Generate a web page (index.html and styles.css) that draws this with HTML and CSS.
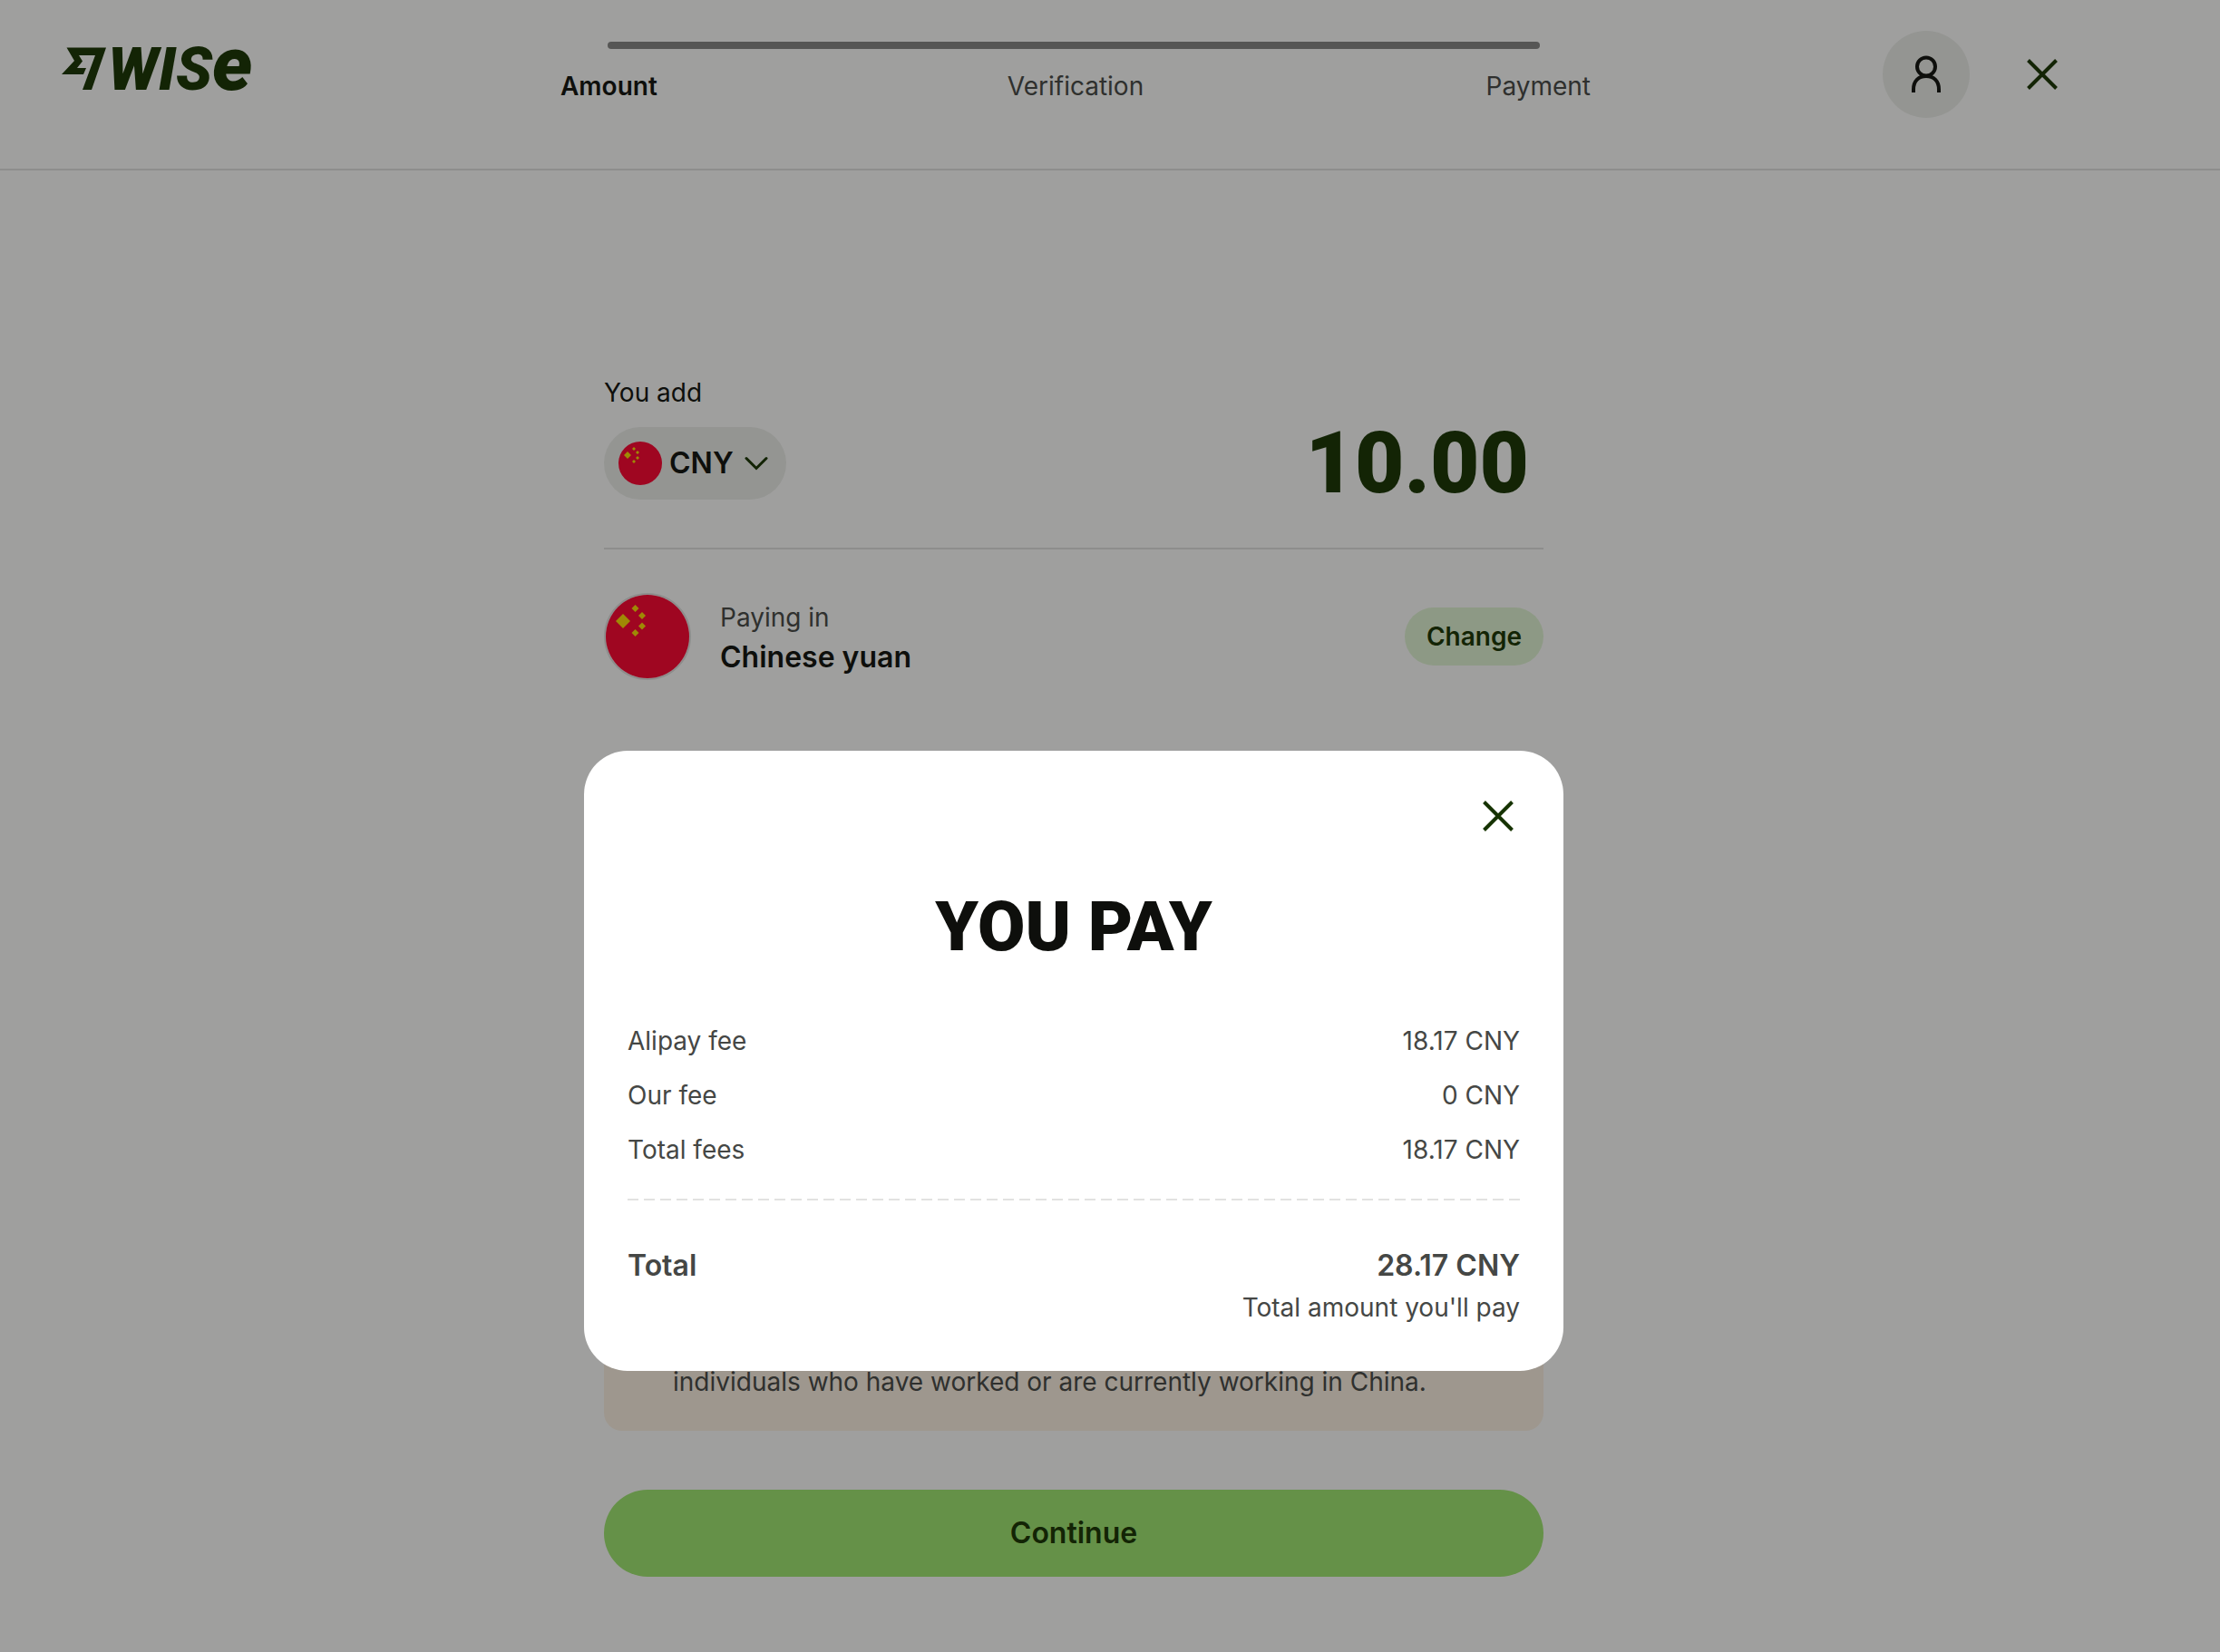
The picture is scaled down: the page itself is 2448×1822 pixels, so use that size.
FILE: index.html
```html
<!DOCTYPE html>
<html lang="en">
<head>
<meta charset="utf-8">
<meta name="viewport" content="width=device-width, initial-scale=1">
<title>Add money - Wise</title>
<link rel="stylesheet" href="styles.css">
</head>
<body>
<header class="header">
  <a class="logo" href="#" aria-label="Wise">
    <svg class="logo-mark" viewBox="0 0 49 48" aria-hidden="true">
      <path d="M5.500 0.500H49L33 47H23L37 9H19L23 15.500L17 23H27L24 30H0L14 15Z"/>
    </svg>
    <span class="logo-word" aria-hidden="true">WIS<span class="logo-e">e</span></span>
  </a>
  <nav class="stepper" aria-label="Progress">
    <div class="stepper-bar"></div>
    <ol class="steps">
      <li class="step step-current" aria-current="step">Amount</li>
      <li class="step">Verification</li>
      <li class="step">Payment</li>
    </ol>
  </nav>
  <div class="header-actions">
    <button class="icon-button avatar" type="button" aria-label="Account">
      <svg class="icon-person" viewBox="0 0 34 42" fill="none" stroke="currentColor" stroke-width="4" aria-hidden="true">
        <circle cx="17" cy="12.500" r="10"/>
        <path d="M3 41V37.500C3 28.500 8.500 23 17 23S31 28.500 31 37.500V41"/>
      </svg>
    </button>
    <button class="icon-button" type="button" aria-label="Close">
      <svg class="icon-cross" viewBox="0 0 34 34" fill="none" stroke="currentColor" stroke-width="4" aria-hidden="true"><path d="M1.500 1.500L32.500 32.500M32.500 1.500L1.500 32.500"/></svg>
    </button>
  </div>
</header>

<main class="main">
  <form class="form">
    <label class="amount-label" for="amount">You add</label>
    <div class="amount-row">
      <button class="currency" type="button">
        <svg class="flag" viewBox="0 0 48 48" aria-hidden="true">
          <circle class="flag-field" cx="24" cy="24" r="24"/>
          <path class="flag-star" d="M10 11l4 4-4 4-4-4zM17 6l2 2-2 2-2-2zM21 10l2 2-2 2-2-2zM21 16l2 2-2 2-2-2zM17 20l2 2-2 2-2-2z"/>
        </svg>
        <span class="currency-code">CNY</span>
        <svg class="icon-chevron" viewBox="0 0 26 16" fill="none" stroke="currentColor" stroke-width="3" stroke-linecap="round" aria-hidden="true"><path d="M2 2.500L13 13.500L24 2.500"/></svg>
      </button>
      <input class="amount" id="amount" type="text" inputmode="decimal" value="10.00">
    </div>
    <section class="paying">
      <svg class="flag-large" viewBox="0 0 96 96" aria-hidden="true">
        <circle class="flag-ring" cx="48" cy="48" r="47"/>
        <circle class="flag-field" cx="48" cy="48" r="46"/>
        <path class="flag-star" d="M21 23l8 8-8 8-8-8zM34.500 13l4 4-4 4-4-4zM42 21l4 4-4 4-4-4zM42 32.500l4 4-4 4-4-4zM34.500 40l4 4-4 4-4-4z"/>
      </svg>
      <div class="paying-text">
        <div class="paying-label">Paying in</div>
        <div class="paying-name">Chinese yuan</div>
      </div>
      <button class="change" type="button">Change</button>
    </section>
    <p class="alert">individuals who have worked or are currently working in China.</p>
    <button class="continue" type="button">Continue</button>
  </form>
</main>

<div class="overlay">
  <section class="modal" role="dialog" aria-modal="true" aria-labelledby="modal-title">
    <button class="icon-button modal-close" type="button" aria-label="Close dialog">
      <svg class="icon-cross" viewBox="0 0 34 34" fill="none" stroke="currentColor" stroke-width="4" aria-hidden="true"><path d="M1.500 1.500L32.500 32.500M32.500 1.500L1.500 32.500"/></svg>
    </button>
    <div class="modal-body">
      <h2 class="modal-title" id="modal-title">YOU PAY</h2>
      <dl class="fees">
        <div class="fee"><dt>Alipay fee</dt><dd>18.17 CNY</dd></div>
        <div class="fee"><dt>Our fee</dt><dd>0 CNY</dd></div>
        <div class="fee"><dt>Total fees</dt><dd>18.17 CNY</dd></div>
      </dl>
      <div class="dashes"></div>
      <dl class="total">
        <dt class="total-value">Total</dt>
        <dd>
          <div class="total-value">28.17 CNY</div>
          <div>Total amount you'll pay</div>
        </dd>
      </dl>
    </div>
  </section>
</div>
</body>
</html>
```

FILE: styles.css
```css
:root {
  --ink: #0e0f0c;
  --ink-soft: #454745;
  --forest: #163300;
  --neutral: rgba(22, 51, 0, 0.08);
  --line: rgba(14, 15, 12, 0.12);
  --gutter-right: 80px;
  --display: Roboto, sans-serif;
}

* {
  box-sizing: border-box;
}

body {
  margin: 0;
  min-height: 100vh;
  background: #fff;
  color: var(--ink);
  font: 28px/44px Inter, "Liberation Sans", sans-serif;
}

button,
input {
  border: 0;
  padding: 0;
  margin: 0;
  background: none;
  color: inherit;
  font: inherit;
}

button {
  cursor: pointer;
}

dl,
dd,
p,
h2,
ol {
  margin: 0;
  padding: 0;
}

/* Header */
.header {
  display: grid;
  grid-template-columns: 1fr minmax(0, 1140px) 1fr;
  align-items: start;
  padding: 34px 148px 56px 68px;
  border-bottom: 2px solid var(--line);
}

.logo {
  display: flex;
  align-items: flex-start;
  gap: 2px;
  margin-top: 18px;
  height: 48px;
  color: var(--forest);
  text-decoration: none;
}

.logo-mark {
  width: 49px;
  height: 48px;
  fill: currentColor;
}

.logo-word {
  font: italic 900 66px/50px var(--display);
}

.logo-e {
  font-size: 84px;
  line-height: 0;
}

.stepper {
  padding: 12px 0 0 4px;
}

.stepper-bar {
  height: 8px;
  margin: 0 56px 0 52px;
  border-radius: 4px;
  background: #868685;
}

.steps {
  display: grid;
  grid-template-columns: 1fr auto 1fr;
  margin-top: 19px;
  list-style: none;
}

.step {
  color: var(--ink-soft);
}

.step:last-child {
  text-align: right;
}

.step-current {
  color: var(--ink);
  font-weight: 600;
}

.header-actions {
  display: flex;
  justify-content: flex-end;
  gap: 32px;
}

.icon-button {
  display: flex;
  align-items: center;
  justify-content: center;
  width: 96px;
  height: 96px;
  border-radius: 50%;
  color: var(--forest);
}

.avatar {
  background: var(--neutral);
  color: var(--ink);
}

.icon-person {
  width: 34px;
  height: 42px;
}

.icon-cross {
  width: 34px;
  height: 34px;
}

/* Form */
.main {
  padding: 223px var(--gutter-right) 80px 0;
}

.form {
  display: flex;
  flex-direction: column;
  max-width: 1036px;
  margin: 0 auto;
}

.amount-row {
  display: flex;
  align-items: center;
  justify-content: space-between;
  margin-top: 16px;
  padding-bottom: 53px;
  border-bottom: 2px solid var(--line);
}

.currency {
  display: flex;
  align-items: center;
  height: 80px;
  padding: 0 20px 0 16px;
  border-radius: 40px;
  background: var(--neutral);
}

.currency-code {
  margin: 0 12px 0 8px;
  font-size: 32px;
  font-weight: 600;
}

.flag {
  width: 48px;
  height: 48px;
}

.flag-large {
  width: 96px;
  height: 96px;
}

.flag-ring {
  fill: none;
  stroke: var(--line);
  stroke-width: 2;
}

.flag-field {
  fill: #ff0030;
}

.flag-star {
  fill: #ffda00;
}

.icon-chevron {
  width: 26px;
  height: 16px;
  color: var(--forest);
}

.amount {
  flex: 1;
  min-width: 0;
  height: 80px;
  padding-right: 16px;
  color: var(--forest);
  font: 900 94px/80px var(--display);
  text-align: right;
}

.paying {
  display: flex;
  align-items: center;
  gap: 32px;
  margin-top: 48px;
}

.paying-text {
  flex: 1;
  padding-top: 2px;
}

.paying-label {
  color: var(--ink-soft);
}

.paying-name {
  font-size: 32px;
  font-weight: 600;
}

.change {
  height: 64px;
  padding: 0 24px;
  border-radius: 32px;
  background: #e2f6d5;
  color: var(--forest);
  font-weight: 600;
}

.alert {
  margin-top: 720px;
  padding: 32px 32px 32px 76px;
  border-radius: 20px;
  background: #fdf2e5;
  color: var(--ink-soft);
}

.continue {
  height: 96px;
  margin-top: 65px;
  border-radius: 48px;
  background: #9fe870;
  color: var(--forest);
  font-size: 32px;
  font-weight: 600;
}

/* Dialog */
.overlay {
  position: fixed;
  inset: 0;
  display: flex;
  align-items: flex-start;
  justify-content: center;
  padding: 828px var(--gutter-right) 0 0;
  background: rgba(14, 15, 12, 0.4);
}

.modal {
  width: 100%;
  max-width: 1080px;
  padding: 24px 24px 48px;
  border-radius: 48px;
  background: #fff;
  color: var(--ink-soft);
}

.modal-close {
  margin-left: auto;
}

.modal-body {
  padding: 34px 24px 0;
}

.modal-title {
  margin-bottom: 64px;
  color: var(--ink);
  font: 900 76px/80px var(--display);
  text-align: center;
}

.fees {
  display: grid;
  gap: 16px;
}

.fee,
.total {
  display: flex;
  justify-content: space-between;
}

.dashes {
  height: 2px;
  margin: 32px 0 48px;
  background: repeating-linear-gradient(90deg, #e2e2e1 0 12px, transparent 12px 18px);
}

.total dd {
  text-align: right;
}

.total-value {
  font-size: 32px;
  line-height: 48px;
  font-weight: 600;
}
```
